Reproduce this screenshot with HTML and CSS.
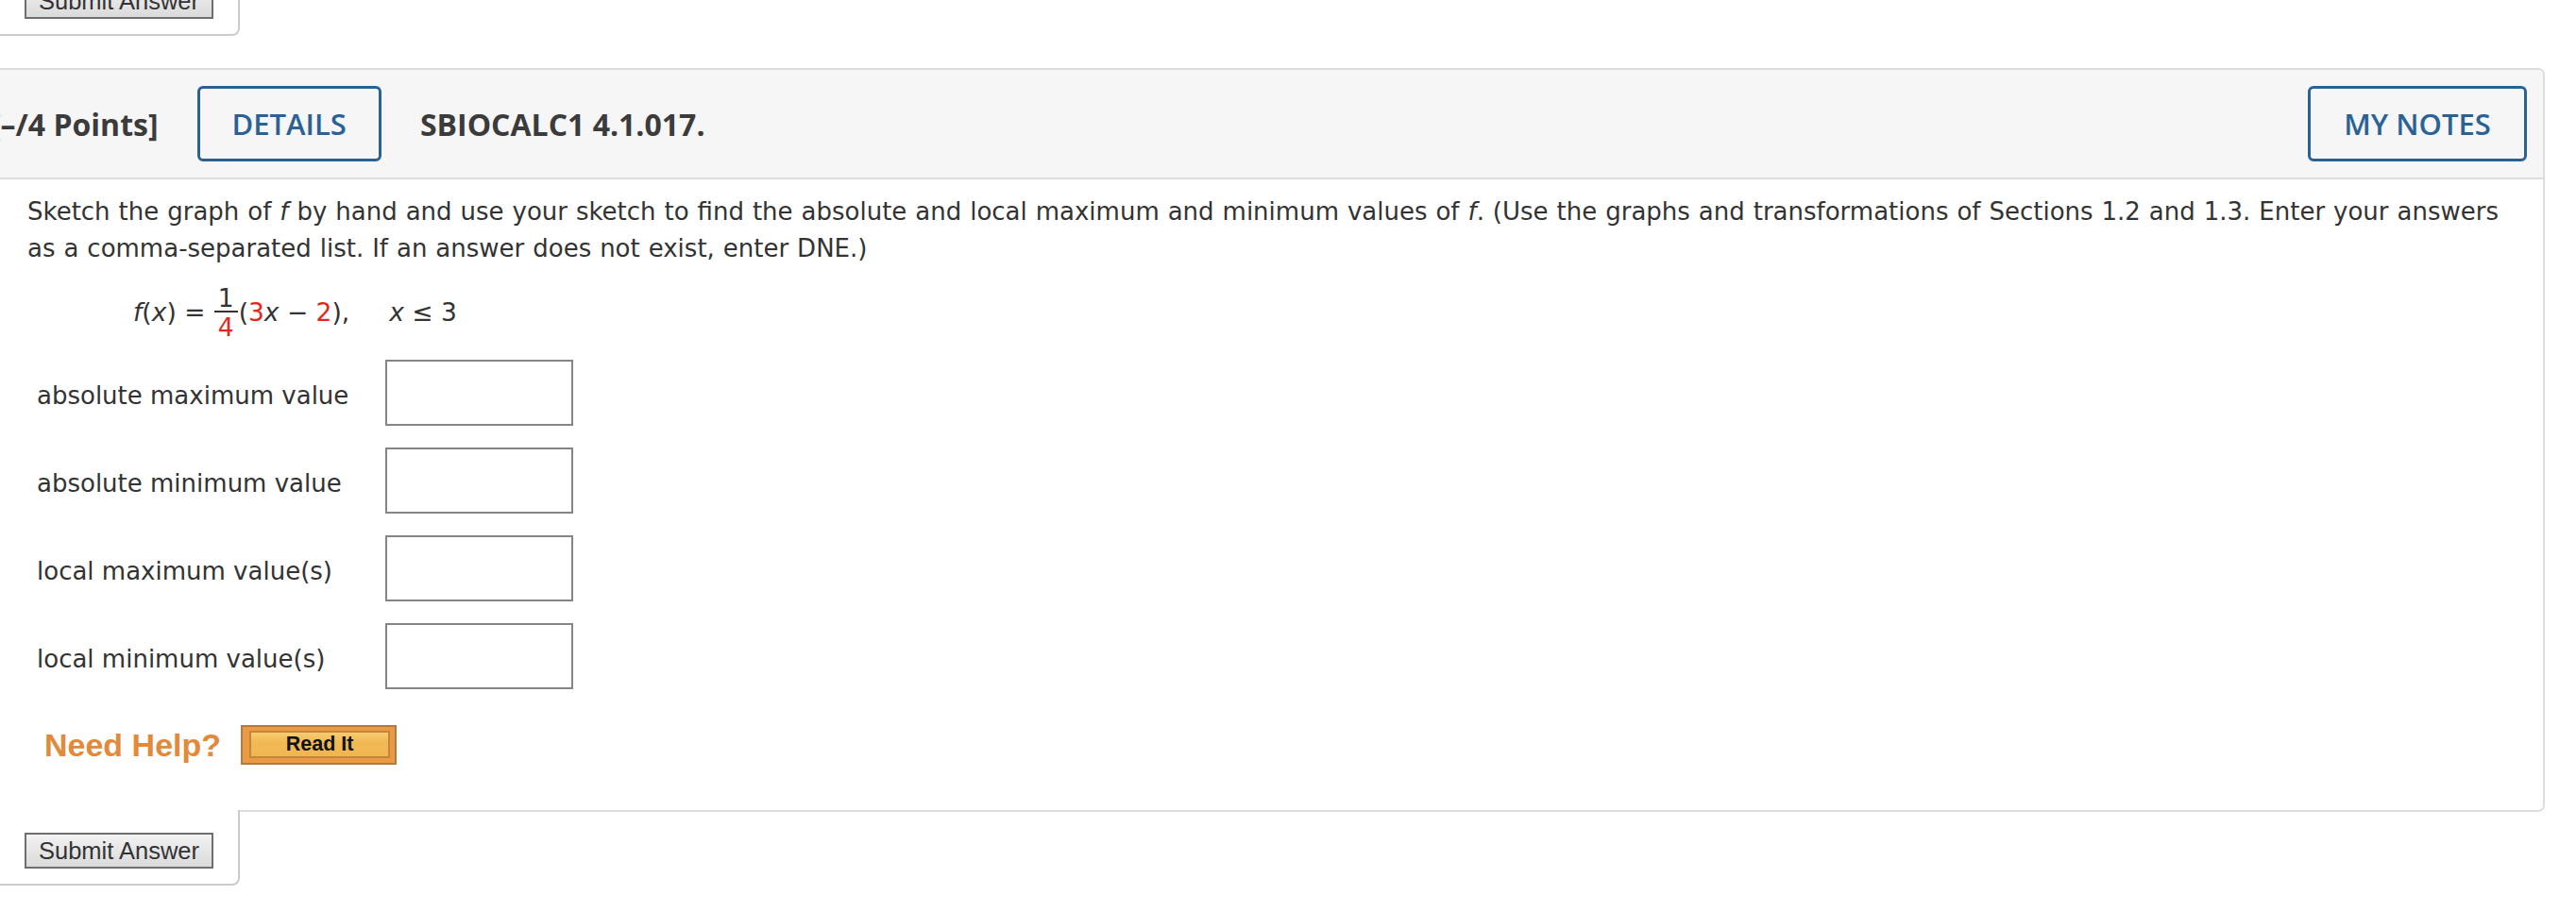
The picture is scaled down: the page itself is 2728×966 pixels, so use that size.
FILE: index.html
```html
<!DOCTYPE html>
<html lang="en">
<head>
<meta charset="utf-8">
<title>SBIOCALC1 4.1.017</title>
<link rel="stylesheet" href="styles.css">
</head>
<body>
<div class="submit-box prev">
  <button class="submit-btn" type="button">Submit Answer</button>
</div>

<section class="panel">
  <header class="panel-head">
    <span class="points">[–/4 Points]</span>
    <button class="head-btn" type="button">DETAILS</button>
    <span class="qid">SBIOCALC1 4.1.017.</span>
    <button class="head-btn notes" type="button">MY NOTES</button>
  </header>
  <div class="panel-body">
    <p class="prompt">Sketch the graph of <i>f</i> by hand and use your sketch to find the absolute and local maximum and minimum values of <i>f</i>. (Use the graphs and transformations of Sections 1.2 and 1.3. Enter your answers as a comma-separated list. If an answer does not exist, enter DNE.)</p>
    <p class="formula"><i>f</i>(<i>x</i>) = <span class="frac"><span class="num">1</span><span class="den red">4</span></span>(<span class="red">3</span><i>x</i> − <span class="red">2</span>),<span class="cond"><i>x</i> ≤ 3</span></p>
    <div class="answers">
      <label class="ans-label" for="a1">absolute maximum value</label>
      <input class="ans-box" id="a1" type="text">
      <label class="ans-label" for="a2">absolute minimum value</label>
      <input class="ans-box" id="a2" type="text">
      <label class="ans-label" for="a3">local maximum value(s)</label>
      <input class="ans-box" id="a3" type="text">
      <label class="ans-label" for="a4">local minimum value(s)</label>
      <input class="ans-box" id="a4" type="text">
    </div>
    <div class="help">
      <span class="need-help">Need Help?</span>
      <span class="read-it"><span class="read-it-inner">Read It</span></span>
    </div>
  </div>
</section>

<div class="submit-box next">
  <button class="submit-btn" type="button">Submit Answer</button>
</div>
</body>
</html>
```
FILE: styles.css
```css
html, body {
  margin: 0;
  padding: 0;
  background: #ffffff;
  overflow: hidden;
}
body {
  width: 2728px;
  height: 966px;
  color: #333333;
  font-family: "DejaVu Sans", Verdana, sans-serif;
}

.submit-box {
  position: relative;
  width: 200px;
  margin-left: -20px;
  padding: 22px 26px 16px 46px;
  background: #ffffff;
  border-right: 2px solid #cccccc;
  border-bottom: 2px solid #cccccc;
  border-bottom-right-radius: 8px;
}
.submit-box.prev {
  margin-top: -40px;
  margin-bottom: 34px;
}
.submit-box.next {
  margin-top: -2px;
  padding-top: 24px;
}
.submit-btn {
  display: block;
  width: 200px;
  height: 38px;
  padding: 0;
  font-family: "Liberation Sans", Arial, sans-serif;
  font-size: 25.5px;
  color: #333333;
  background: linear-gradient(#f2f2f2, #dadada);
  border: 2px solid #6e6e6e;
  border-radius: 0;
}

.panel {
  margin: 0 33px 0 -20px;
  border: 2px solid #dddddd;
  border-top-right-radius: 7px;
  border-bottom-right-radius: 7px;
  background: #ffffff;
}
.panel-head {
  display: flex;
  align-items: center;
  height: 114px;
  padding: 0 17px 0 8px;
  background: #f6f6f6;
  border-bottom: 2px solid #dddddd;
  border-top-right-radius: 5px;
  font-family: "Open Sans", sans-serif;
  font-weight: 700;
  font-size: 32px;
  color: #3b3b3b;
}
.points {
  margin-right: 41px;
}
.head-btn {
  height: 80px;
  padding: 0 34px;
  font-family: "Open Sans", sans-serif;
  font-weight: 600;
  font-size: 31px;
  color: #2b6296;
  background: transparent;
  border: 3px solid #2b6296;
  border-radius: 6px;
}
.qid {
  margin-left: 41px;
}
.head-btn.notes {
  margin-left: auto;
  width: 232px;
  padding: 0;
}

.panel-body {
  padding: 15px 40px 48px 47px;
  font-size: 26px;
  line-height: 39px;
}
.prompt {
  margin: 0;
  word-spacing: 0.7px;
}
.red {
  color: #e2281c;
}
.formula {
  margin: 20px 0 0 112px;
  font-size: 26.5px;
  line-height: 39px;
}
.frac {
  display: inline-flex;
  flex-direction: column;
  align-items: center;
  vertical-align: 15px;
  line-height: 26px;
  margin: 0 1px;
}
.frac .num {
  padding: 0 4px;
  border-bottom: 2px solid #333333;
}
.frac .den {
  padding-top: 3px;
}
.cond {
  margin-left: 42px;
}

.answers {
  display: grid;
  grid-template-columns: 369px 199px;
  grid-auto-rows: 70px;
  row-gap: 23px;
  align-items: center;
  margin: 21px 0 0 10px;
}
.ans-label {
  padding-top: 6px;
}
.ans-box {
  box-sizing: border-box;
  width: 199px;
  height: 70px;
  margin: 0;
  border: 2px solid #858585;
  background: #ffffff;
}

.help {
  display: flex;
  align-items: center;
  margin: 38px 0 0 18px;
  height: 42px;
}
.need-help {
  font-family: "Liberation Sans", Arial, sans-serif;
  font-weight: 700;
  font-size: 34px;
  color: #e3893a;
  margin-right: 21px;
}
.read-it {
  display: inline-flex;
  box-sizing: border-box;
  width: 165px;
  height: 42px;
  padding: 4px 5px 5px 7px;
  background: #e99a43;
  border: 2px solid #b27a3e;
}
.read-it-inner {
  flex: 1;
  display: flex;
  align-items: center;
  justify-content: center;
  background: linear-gradient(#f7cd70, #f1b955 40%, #f0b650);
  border: 2px solid #c4853d;
  font-family: "Liberation Sans", Arial, sans-serif;
  font-weight: 700;
  font-size: 21.5px;
  color: #111111;
}
```
